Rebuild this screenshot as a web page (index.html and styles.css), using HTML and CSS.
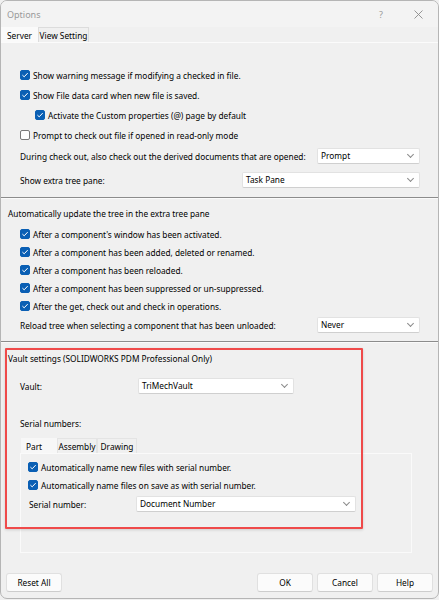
FILE: index.html
```html
<!DOCTYPE html>
<html lang="en">
<head>
  <meta charset="UTF-8" />
  <title>Options</title>
  <link rel="stylesheet" href="styles.css">
</head>
<body>
  <div class="window">
    <div class="titlebar">
      <span class="title">Options</span>
      <span class="help">?</span>
      <svg class="close" width="9" height="9" viewBox="0 0 9 9"><path d="M0.5 0.5L8.5 8.5M8.5 0.5L0.5 8.5" stroke="#8a8a8a" stroke-width="0.9"/></svg>
    </div>

    <div class="tabs">
      <div class="tab active">Server</div>
      <div class="tab">View Setting</div>
    </div>

    <div class="panel">
      <div class="section first">
        <label class="check"><span class="box on"></span>Show warning message if modifying a checked in file.</label>
        <label class="check"><span class="box on"></span>Show File data card when new file is saved.</label>
        <label class="check indent"><span class="box on"></span>Activate the Custom properties (@) page by default</label>
        <label class="check"><span class="box"></span>Prompt to check out file if opened in read-only mode</label>
        <div class="field-row derived">
          <span>During check out, also check out the derived documents that are opened:</span>
          <div class="select narrow">Prompt</div>
        </div>
        <div class="field-row pane">
          <span>Show extra tree pane:</span>
          <div class="select wide">Task Pane</div>
        </div>
      </div>

      <div class="separator"></div>

      <div class="section second">
        <div class="heading">Automatically update the tree in the extra tree pane</div>
        <label class="check tight"><span class="box on"></span>After a component's window has been activated.</label>
        <label class="check tight"><span class="box on"></span>After a component has been added, deleted or renamed.</label>
        <label class="check tight"><span class="box on"></span>After a component has been reloaded.</label>
        <label class="check tight"><span class="box on"></span>After a component has been suppressed or un-suppressed.</label>
        <label class="check tight"><span class="box on"></span>After the get, check out and check in operations.</label>
        <div class="field-row">
          <span>Reload tree when selecting a component that has been unloaded:</span>
          <div class="select narrow">Never</div>
        </div>
      </div>

      <div class="separator"></div>

      <div class="section third">
        <div class="heading">Vault settings (SOLIDWORKS PDM Professional Only)</div>
        <div class="vault-row">
          <span class="label">Vault:</span>
          <div class="select vault">TriMechVault</div>
        </div>
        <div class="serial-label">Serial numbers:</div>
        <div class="subtabs">
          <div class="subtab active">Part</div>
          <div class="subtab">Assembly</div>
          <div class="subtab">Drawing</div>
        </div>
        <div class="subpanel">
          <label class="check tight"><span class="box on"></span>Automatically name new files with serial number.</label>
          <label class="check tight"><span class="box on"></span>Automatically name files on save as with serial number.</label>
          <div class="serial-row">
            <span class="label">Serial number:</span>
            <div class="select doc">Document Number</div>
          </div>
        </div>
        <div class="highlight"></div>
      </div>
    </div>

    <div class="buttons">
      <button class="btn">Reset All</button>
      <div class="spacer"></div>
      <button class="btn">OK</button>
      <button class="btn">Cancel</button>
      <button class="btn">Help</button>
    </div>
  </div>
</body>
</html>
```

FILE: styles.css
```css
html, body {
  margin: 0;
  padding: 0;
  background: #f0f0f0;
}

body {
  font-family: 'Noto Sans', 'Open Sans', sans-serif;
  font-size: 8.3px;
  color: #000;
  width: 439px;
  height: 600px;
  overflow: hidden;
}

.window {
  box-sizing: border-box;
  width: 439px;
  height: 599px;
  border: 1px solid #b5b5b5;
  border-radius: 7px;
  background: #f0f0f0;
  display: flex;
  flex-direction: column;
  overflow: hidden;
}

.titlebar {
  height: 26px;
  display: flex;
  align-items: center;
  padding: 0 0 0 6px;
  background: #f3f3f3;
}

.title {
  font-size: 9px;
  color: #9a9a9a;
  flex: 1;
}

.help {
  color: #9a9a9a;
  font-size: 9px;
  margin-right: 31px;
}

.close {
  margin-right: 15px;
}

.tabs {
  display: flex;
  height: 15px;
  border-bottom: 1px solid #fbfbfb;
}

.tab {
  box-sizing: border-box;
  width: 51px;
  text-align: center;
  line-height: 15px;
  border: 1px solid #dcdcdc;
  border-bottom: none;
  background: #f0f0f0;
}

.tab.active {
  width: 37px;
  background: #fafafa;
  border-color: #fafafa;
  text-align: left;
  padding-left: 5px;
}

.panel {
  flex: 1;
}

.check {
  display: flex;
  align-items: center;
  height: 20px;
  padding-left: 19px;
  white-space: nowrap;
}

.check.indent {
  padding-left: 34px;
}

.check.tight {
  height: 18px;
}

.box {
  box-sizing: border-box;
  width: 10px;
  height: 10px;
  margin-right: 3px;
  border: 1px solid #7a7a7a;
  border-radius: 2px;
  background: #fff;
  flex: none;
}

.box.on {
  border-color: #0a5fb4;
  background: #0a5fb4 url("data:image/svg+xml,%3Csvg xmlns='http://www.w3.org/2000/svg' viewBox='0 0 10 10'%3E%3Cpath d='M2.4 5.1L4.2 6.8L7.7 3.1' fill='none' stroke='white' stroke-width='1'/%3E%3C/svg%3E") center / 10px 10px no-repeat;
}

.section.first {
  padding-top: 22px;
  padding-bottom: 7px;
}

.field-row {
  display: flex;
  align-items: center;
  justify-content: space-between;
  height: 20px;
  padding: 0 18px 0 19px;
  white-space: nowrap;
}

.field-row.derived {
  margin-top: 1px;
}

.field-row.pane {
  margin-top: 4px;
}

.select {
  box-sizing: border-box;
  height: 16px;
  line-height: 14px;
  padding-left: 3px;
  background: #fff;
  border: 1px solid #e2e2e2;
  border-bottom-color: #cfcfcf;
  border-radius: 2px;
  position: relative;
}

.select::after {
  content: "";
  position: absolute;
  right: 6px;
  top: 3px;
  width: 4px;
  height: 4px;
  border-right: 1px solid #8a8a8a;
  border-bottom: 1px solid #8a8a8a;
  transform: rotate(45deg);
}

.select.narrow {
  width: 103px;
}

.select.wide {
  width: 178px;
}

.separator {
  height: 1px;
  background: #8c8c8c;
  border-bottom: 1px solid #fafafa;
}

.section.second {
  padding-top: 5px;
  padding-bottom: 6px;
}

.heading {
  height: 20px;
  line-height: 20px;
  padding-left: 7px;
}

.section.second .heading {
  margin-bottom: 1px;
}

.section.third {
  position: relative;
  padding-top: 6px;
}

.vault-row {
  display: flex;
  align-items: center;
  height: 20px;
  margin-top: 7px;
  padding-left: 19px;
}

.vault-row .label {
  width: 118px;
}

.select.vault {
  width: 156px;
}

.serial-label {
  height: 20px;
  line-height: 20px;
  margin-top: 18px;
  padding-left: 19px;
}

.subtabs {
  display: flex;
  margin-top: 4px;
  margin-left: 20px;
  height: 15px;
}

.subtab {
  box-sizing: border-box;
  width: 40px;
  text-align: center;
  line-height: 15px;
  border: 1px solid #e4e4e4;
  border-bottom: none;
}

.subtab.active {
  width: 36px;
  text-align: left;
  background: #f7f7f7;
  border-color: #f7f7f7;
  padding-left: 4px;
}

.subpanel {
  box-sizing: border-box;
  margin-left: 19px;
  width: 392px;
  height: 100px;
  padding-top: 4px;
  border: 1px solid #fafafa;
}

.subpanel .check {
  padding-left: 7px;
}

.serial-row {
  display: flex;
  align-items: center;
  height: 20px;
  padding-left: 8px;
}

.serial-row .label {
  width: 107px;
}

.select.doc {
  width: 220px;
}

.highlight {
  position: absolute;
  left: 4px;
  top: 5px;
  width: 358px;
  height: 181px;
  border: 2px solid #ef4a4a;
  border-radius: 1px;
  box-shadow: 0 1px 3px rgba(0, 0, 0, 0.15);
  box-sizing: border-box;
}

.buttons {
  display: flex;
  gap: 4px;
  padding: 0 5px 6px 5px;
}

.spacer {
  flex: 1;
}

.btn {
  width: 56px;
  height: 19px;
  font-family: inherit;
  font-size: 8.3px;
  color: #000;
  background: #fbfbfb;
  border: 1px solid #e0e0e0;
  border-bottom-color: #cdcdcd;
  border-radius: 3px;
  padding: 0;
}
```
